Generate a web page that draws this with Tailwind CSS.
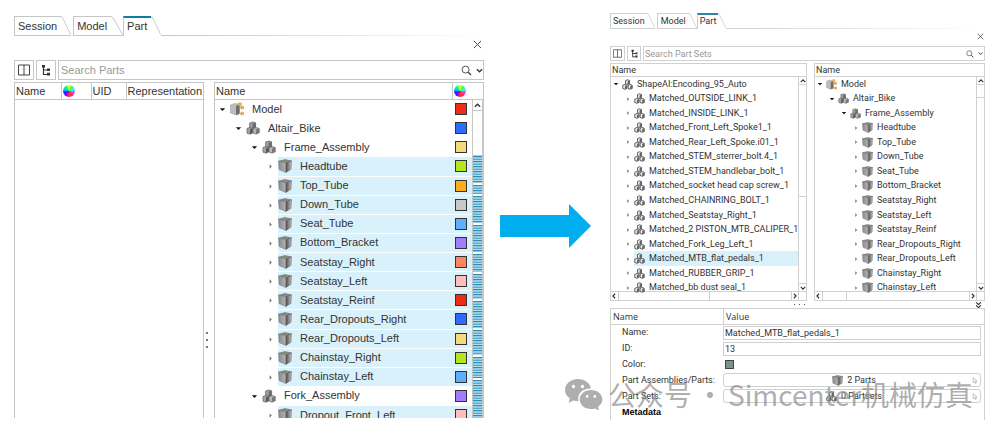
<!DOCTYPE html>
<html lang="en">
<head>
  <meta charset="UTF-8" />
  <meta name="viewport" content="width=device-width, initial-scale=1.0" />
  <title>Part Browser</title>
  <script src="https://cdn.jsdelivr.net/npm/@tailwindcss/browser@4"></script>
</head>
<body class="relative bg-white text-[#333] font-['Liberation_Sans',Arial,sans-serif]">

  <!-- icons -->
  <svg class="absolute size-0">
    <defs>
      <linearGradient id="face" x1="0" x2="1"><stop offset="0" stop-color="#8c8c8c" /><stop offset="1" stop-color="#b4b4b4" /></linearGradient>
      <linearGradient id="side" x1="0" x2="1"><stop offset="0" stop-color="#4a4a4a" /><stop offset="1" stop-color="#c4c4c4" /></linearGradient>
      <symbol id="part" viewBox="0 0 14 14">
        <path d="M.6 2.2 7 .6l6.400 1.300L8 3.800z" fill="#8b8b8b" stroke="#6a6a6a" stroke-width=".6" />
        <path d="M.6 2.200 8 3.800v9.600L1.200 10.600z" fill="url(#face)" stroke="#777" stroke-width=".6" />
        <path d="M8 3.800l5.400-1.900-.5 8.400L8 13.400z" fill="url(#side)" stroke="#666" stroke-width=".6" />
      </symbol>
      <symbol id="assembly" viewBox="0 0 14 14">
        <path d="M3.6 2 7 1l2.6.8v5L6.6 8l-3-.9z" fill="#a0a0a0" stroke="#5c5c5c" stroke-width=".7" />
        <path d="M6.6 2.8V8l3-1.2v-5z" fill="#6a6a6a" />
        <path d="M1 7.4l2.8-.9 2.8.8v4.6L4 13.2l-3-1z" fill="#a2a2a2" stroke="#606060" stroke-width=".7" />
        <path d="M4 8.3v4.9l2.6-1.3V7.3z" fill="#5a5a5a" />
        <path d="M7 7.6l3-1 3.2.9v4.3L10 13.1l-3-1z" fill="#b8b8b8" stroke="#5c5c5c" stroke-width=".7" />
        <path d="M10 8.6v4.5l3.2-1.3V7.5z" fill="#777" />
      </symbol>
      <symbol id="model" viewBox="0 0 14 14">
        <path d="M.5 3 5 1.400l4 1V12L6 13 .5 11z" fill="#bdbdbd" stroke="#999" stroke-width=".5" />
        <path d="M6 4l3-1.400V12l-3 1z" fill="#6f6f6f" />
        <path d="M9.500 2v9.500M9.500 5.500h2.500M9.500 11.500h2.500" fill="none" stroke="#c98a2b" stroke-width="1" />
        <path d="M8.200 1h3v2.600h-3zM11 4.300h2.600v2.600H11zM11 10.200h2.600v2.600H11z" fill="#f3c061" stroke="#c98a2b" stroke-width=".6" />
      </symbol>
      <symbol id="set" viewBox="0 0 14 14">
        <g fill="#f4f4f4" stroke="#444" stroke-width="1.100">
          <path d="M4.500 2 7 1l2.600 1v4L7 7 4.500 6z" />
          <path d="M1 8l2.700-1 2.600 1v4L3.700 13 1 12z" />
          <path d="M7.700 8l2.700-1L13 8v4l-2.600 1-2.700-1z" />
        </g>
        <path d="M7 2.800V7l2.600-1V2zM3.700 8.800V13l2.600-1V8zM10.400 8.800V13L13 12V8z" fill="#666" />
      </symbol>
      <symbol id="open" viewBox="0 0 8 8"><path d="M1 2.500h6L4 5.800z" fill="#111" /></symbol>
      <symbol id="closed" viewBox="0 0 8 8"><path d="M3 1.500 5.500 4 3 6.500z" fill="#777" /></symbol>
      <symbol id="close" viewBox="0 0 10 10"><path d="M1 1l8 8M9 1L1 9" stroke="#444" stroke-width="1.100" /></symbol>
      <symbol id="columns" viewBox="0 0 12 12"><path d="M.5 1h11v10H.5zM6 1v10" fill="none" stroke="#444" /></symbol>
      <symbol id="tree" viewBox="0 0 12 12">
        <path d="M3.500 2v8.500H7M3.500 6H7" fill="none" stroke="#333" stroke-width="1.200" />
        <path d="M2 1h3v2.600H2zM7 4.500h3v2.600H7zM7 8.800h3v2.600H7z" fill="#333" />
      </symbol>
      <symbol id="search" viewBox="0 0 12 12"><circle cx="5" cy="5" r="3.800" fill="none" stroke="#444" /><path d="M7.800 7.800 11 11" stroke="#444" stroke-width="1.500" /></symbol>
      <symbol id="down" viewBox="0 0 8 8"><path d="M1 2.500l3 3 3-3" fill="none" stroke="#333" stroke-width="1.500" /></symbol>
      <symbol id="slant" viewBox="0 0 12 19" preserveAspectRatio="none"><path d="M0 .5 1.500 1 11.500 18.500" fill="none" stroke="#c6c6c6" /></symbol>
      <symbol id="pick" viewBox="0 0 8 10"><path d="M1.500 1v7l1.700-1.500L4.500 9.500l1.200-.6L4.600 6H7z" fill="#fff" stroke="#999" stroke-width=".8" /></symbol>
    </defs>
  </svg>

  <main class="grid grid-cols-[470fr_126fr_375fr] items-start pl-[14px] pr-5">

    <!-- before -->
    <section class="pt-4 text-[11px] leading-none">
      <nav class="flex h-5 gap-[2px]">
        <button class="flex border-b border-[#c6c6c6]"><span class="h-full border-l border-t border-[#c6c6c6] pl-[3px] pr-1 pt-1">Session</span><svg class="h-[19px] w-[10px]"><use href="#slant" /></svg></button>
        <button class="-mr-[2px] flex border-b border-[#c6c6c6]"><span class="h-full border-l border-t border-[#c6c6c6] pl-[3px] pr-1 pt-1">Model</span><svg class="h-[19px] w-3"><use href="#slant" /></svg></button>
        <button class="flex"><span class="h-full border-l border-t-2 border-l-[#c6c6c6] border-t-[#0f7ba3] pl-[3px] pr-1 pt-[3px]">Part</span><svg class="h-[19px] w-[10px]"><use href="#slant" /></svg></button>
        <span class="-ml-[2px] h-px flex-1 self-end bg-linear-to-r from-[#c6c6c6] to-white"></span>
      </nav>
      <div class="flex h-6 items-start justify-end pt-1">
        <button aria-label="Close" class="mr-[2px]"><svg class="size-[9px]"><use href="#close" /></svg></button>
      </div>
      <div class="flex h-5 gap-[2px]">
        <button aria-label="Columns" class="flex w-5 items-center justify-center border border-[#c6c6c6]"><svg class="size-3"><use href="#columns" /></svg></button>
        <button aria-label="Tree" class="flex w-5 items-center justify-center border border-[#c6c6c6]"><svg class="size-3"><use href="#tree" /></svg></button>
        <label class="flex flex-1 items-center border border-[#c6c6c6] pl-[2px]">
          <input type="text" aria-label="Search Parts" placeholder="Search Parts" class="min-w-0 flex-1 outline-none placeholder:text-[#999]" />
          <svg class="size-[11px]"><use href="#search" /></svg>
          <svg class="ml-1 size-[7px]"><use href="#down" /></svg>
        </label>
      </div>
      <div class="mt-[2px] flex h-[336px]">
        <div class="w-[190px] border-x border-t border-[#c6c6c6]">
          <table class="h-[17px] w-full table-fixed border-b border-[#c6c6c6] text-left">
            <tr>
              <th class="w-[46px] pl-[1px] font-normal">Name</th>
              <th class="w-[30px] border-l border-[#c6c6c6] pl-[1px]"><span class="block size-3 rounded-full bg-[conic-gradient(#ff3,#3f3,#3ff,#f3f,#f33,#f33,#80f,#22f,#0cf,#0f6,#ff3)]"></span></th>
              <th class="w-[35px] border-l border-[#c6c6c6] pl-[1px] font-normal">UID</th>
              <th class="overflow-hidden border-l border-[#c6c6c6] pl-[1px] font-normal">Representation</th>
            </tr>
          </table>
        </div>
        <div class="flex w-[10px] flex-col items-center justify-center gap-[5px] pt-[179px] pr-1">
          <i class="size-[2px] bg-[#777]"></i><i class="size-[2px] bg-[#777]"></i><i class="size-[2px] bg-[#777]"></i>
        </div>
        <div class="flex min-w-0 flex-1 flex-col overflow-hidden border-x border-t border-[#c6c6c6]">
          <div class="flex h-[17px] shrink-0 items-center border-b border-[#c6c6c6]">
            <span class="flex-1 pl-[1px]">Name</span>
            <span class="flex h-full w-[31px] items-center border-l border-[#c6c6c6] pl-[1px]"><span class="block size-3 rounded-full bg-[conic-gradient(#ff3,#3f3,#3ff,#f3f,#f33,#f33,#80f,#22f,#0cf,#0f6,#ff3)]"></span></span>
          </div>
          <div class="flex min-h-0 flex-1">
            <ul id="parts" class="flex h-[325px] flex-1 flex-col"></ul>
            <div class="flex w-[11px] flex-col border-x border-[#c6c6c6]">
              <div class="flex h-[11px] items-center justify-center border-b border-[#c6c6c6]"><svg class="size-[7px] rotate-180"><use href="#down" /></svg></div>
              <div class="h-[45px] border-b border-[#c6c6c6]"></div>
              <div id="marks" class="flex flex-1 flex-col gap-[2px]"></div>
            </div>
          </div>
        </div>
      </div>
    </section>

    <svg class="mt-[203px] ml-4 h-[46px] w-[91px]" viewBox="0 0 91 46"><path d="M0 12h69V1l22 22-22 22V34H0z" fill="#00aeef" /></svg>

    <!-- after -->
    <section class="pt-[13px] text-[9px] leading-none font-[Roboto,'Liberation_Sans',sans-serif]">
      <nav class="flex h-4 gap-[2px]">
        <button class="flex border-b border-[#d0d0d0]"><span class="h-full border-l border-t border-[#d0d0d0] px-[2px] pt-[3px]">Session</span><svg class="h-[15px] w-[8px]"><use href="#slant" /></svg></button>
        <button class="-mr-[2px] flex border-b border-[#d0d0d0]"><span class="h-full border-l border-t border-[#d0d0d0] px-[3px] pt-[3px]">Model</span><svg class="h-[15px] w-[8px]"><use href="#slant" /></svg></button>
        <button class="flex"><span class="h-full border-l border-t-2 border-l-[#d0d0d0] border-t-[#2a86b0] px-[2px] pt-[2px]">Part</span><svg class="h-[15px] w-[8px]"><use href="#slant" /></svg></button>
        <span class="-ml-[2px] h-px flex-1 self-end bg-linear-to-r from-[#d0d0d0] to-white"></span>
      </nav>
      <div class="flex h-[17px] items-start justify-end pt-1">
        <button aria-label="Close" class="mr-[1px]"><svg class="size-[7px]"><use href="#close" /></svg></button>
      </div>
      <div class="flex h-[15px] gap-[2px]">
        <button aria-label="Columns" class="flex w-[15px] items-center justify-center border border-[#d0d0d0]"><svg class="size-[9px]"><use href="#columns" /></svg></button>
        <button aria-label="Tree" class="flex w-[14px] items-center justify-center border border-[#d0d0d0]"><svg class="size-[9px]"><use href="#tree" /></svg></button>
        <label class="flex flex-1 items-center border border-[#d0d0d0] pl-[1px]">
          <input type="text" aria-label="Search Part Sets" placeholder="Search Part Sets" class="min-w-0 flex-1 outline-none placeholder:text-[#999]" />
          <svg class="size-2"><use href="#search" /></svg>
          <svg class="ml-1 mr-[1px] size-[5px]"><use href="#down" /></svg>
        </label>
      </div>

      <div class="mt-[2px] grid grid-cols-[197fr_171fr] gap-[7px]">
        <div class="min-w-0 border border-[#d0d0d0]">
          <div class="flex h-[13px] items-center border-b border-[#d0d0d0] pl-[1px]">Name</div>
          <div class="flex h-[214px]">
            <ul id="sets" class="flex h-[218px] min-w-0 flex-1 flex-col"></ul>
            <div class="flex w-2 shrink-0 flex-col border-l border-[#d0d0d0]">
              <div class="flex h-2 items-center justify-center border-b border-[#d0d0d0]"><svg class="size-[6px] rotate-180"><use href="#down" /></svg></div>
              <div class="h-[112px] border-b border-[#d0d0d0]"></div>
              <div class="mt-auto flex h-2 items-center justify-center border-t border-[#d0d0d0]"><svg class="size-[6px]"><use href="#down" /></svg></div>
            </div>
          </div>
          <div class="flex h-[9px] items-center border-t border-[#d0d0d0] pr-[7px]">
            <span class="flex h-full w-2 items-center border-r border-[#d0d0d0]"><svg class="size-[6px] rotate-90"><use href="#down" /></svg></span>
            <span class="h-full w-[91px] border-r border-[#d0d0d0]"></span>
            <span class="ml-auto flex h-full w-2 items-center justify-center border-x border-[#d0d0d0]"><svg class="size-[6px] -rotate-90"><use href="#down" /></svg></span>
          </div>
        </div>
        <div class="min-w-0 border border-[#d0d0d0]">
          <div class="flex h-[13px] items-center border-b border-[#d0d0d0] pl-[1px]">Name</div>
          <div class="flex h-[214px]">
            <ul id="model-tree" class="flex h-[218px] min-w-0 flex-1 flex-col"></ul>
            <div class="flex w-2 shrink-0 flex-col border-l border-[#d0d0d0]">
              <div class="flex h-2 items-center justify-center border-b border-[#d0d0d0]"><svg class="size-[6px] rotate-180"><use href="#down" /></svg></div>
              <div class="h-[13px] border-b border-[#d0d0d0]"></div>
              <div class="mt-auto flex h-2 items-center justify-center border-t border-[#d0d0d0]"><svg class="size-[6px]"><use href="#down" /></svg></div>
            </div>
          </div>
          <div class="flex h-[9px] items-center border-t border-[#d0d0d0] pr-[7px]">
            <span class="flex h-full w-2 items-center border-r border-[#d0d0d0]"><svg class="size-[6px] rotate-90"><use href="#down" /></svg></span>
            <span class="h-full w-6 border-r border-[#d0d0d0]"></span>
            <span class="ml-auto flex h-full w-2 items-center justify-center border-x border-[#d0d0d0]"><svg class="size-[6px] -rotate-90"><use href="#down" /></svg></span>
          </div>
        </div>
      </div>

      <div class="flex h-[7px] items-center pr-1">
        <span class="flex w-[197px] justify-end gap-1 pr-[2px]"><i class="size-px bg-[#555]"></i><i class="size-px bg-[#555]"></i><i class="size-px bg-[#555]"></i></span>
        <span class="ml-auto flex flex-col"><svg class="h-[3px] w-[5px]" viewBox="1 2 6 4"><use href="#down" width="8" height="8" /></svg><svg class="h-[3px] w-[5px]" viewBox="1 2 6 4"><use href="#down" width="8" height="8" /></svg></span>
      </div>

      <div class="grid h-[112px] grid-cols-[112px_1fr] grid-rows-[16px_repeat(6,1fr)] items-center border-x border-t border-[#d0d0d0]">
        <div class="flex h-full items-center border-b border-[#d0d0d0] pl-[2px] font-['Open_Sans',sans-serif]">Name</div>
        <div class="flex h-full items-center border-b border-l border-[#d0d0d0] pl-[2px] font-['Open_Sans',sans-serif]">Value</div>
        <label for="name" class="pl-[11px]">Name:</label>
        <input id="name" type="text" value="Matched_MTB_flat_pedals_1" class="mr-[3px] h-[14px] border border-[#d0d0d0] pl-[1px]" />
        <label for="id" class="pl-[11px]">ID:</label>
        <input id="id" type="text" value="13" class="mr-[3px] h-[14px] border border-[#d0d0d0] pl-[1px]" />
        <span class="pl-[11px]">Color:</span>
        <button aria-label="Color" class="ml-[2px] size-[9px] border border-[#444] bg-[#7b918b]"></button>
        <span class="pl-[11px]">Part Assemblies/Parts:</span>
        <button class="mr-[3px] flex h-[14px] items-center rounded-[3px] border border-[#d0d0d0] pr-[2px]"><span class="flex flex-1 items-center justify-center gap-1 pl-3"><svg class="size-[11px]"><use href="#part" /></svg>2 Parts</span><svg class="h-[7px] w-[6px]"><use href="#pick" /></svg></button>
        <span class="pl-[11px]">Part Sets:</span>
        <button class="mr-[3px] flex h-[14px] items-center rounded-[3px] border border-[#d0d0d0] pr-[2px]"><span class="flex flex-1 items-center justify-center gap-1 pl-3"><svg class="size-[11px]"><use href="#set" /></svg>0 Partsets</span><svg class="h-[7px] w-[6px]"><use href="#pick" /></svg></button>
        <b class="pl-[11px] text-black font-['Liberation_Sans',sans-serif]">Metadata</b>
      </div>
    </section>
  </main>

  <!-- watermark -->
  <div class="pointer-events-none absolute right-8 bottom-2 flex items-center text-[28px] leading-9 text-[#8c8c8c]/70 font-['Noto_Sans_CJK_SC',sans-serif]">
    <svg class="mr-1 h-8 w-10" viewBox="0 0 40 32" fill="currentColor">
      <path fill-rule="evenodd" d="M14 1C6.500 1 1 6 1 12c0 3.500 1.900 6.500 4.800 8.500L4.500 25l5-2.500c1.500.4 3.200.7 5 .7C13 16 18.500 10.500 27 10.600 26 5 20.500 1 14 1zM9.500 6.800a1.700 1.700 0 1 1 0 3.400 1.700 1.700 0 0 1 0-3.400zm9 0a1.700 1.700 0 1 1 0 3.400 1.700 1.700 0 0 1 0-3.400z" />
      <path fill-rule="evenodd" d="M27 12c-6.500 0-11.300 4.200-11.300 9.500S20.500 31 27 31c1.400 0 2.700-.2 3.900-.6l4.100 2-1-3.600c2.700-1.800 4.300-4.300 4.300-7.300C38.300 16.200 33.500 12 27 12zm-3.800 5a1.400 1.400 0 1 1 0 2.800 1.400 1.400 0 0 1 0-2.800zm7.600 0a1.400 1.400 0 1 1 0 2.800 1.400 1.400 0 0 1 0-2.800z" />
    </svg>
    <span>公众号</span>
    <span class="w-9 text-center">·</span>
    <span>Simcenter机械仿真</span>
  </div>

  <script>
    const frame = ['Headtube', 'Top_Tube', 'Down_Tube', 'Seat_Tube', 'Bottom_Bracket', 'Seatstay_Right', 'Seatstay_Left',
      'Seatstay_Reinf', 'Rear_Dropouts_Right', 'Rear_Dropouts_Left', 'Chainstay_Right', 'Chainstay_Left'];
    const colors = ['#b5e61d', '#ffae1a', '#c8c8c8', '#5eb0ff', '#a07cff', '#ff8560', '#ffbdbd', '#f02c18', '#2c6cff', '#f5d97a', '#b5e61d', '#5eb0ff'];

    // [level, icon, name, color, selected]
    const parts = [
      [0, 'model', 'Model', '#f02c18'],
      [1, 'assembly', 'Altair_Bike', '#2c6cff'],
      [2, 'assembly', 'Frame_Assembly', '#f5d97a'],
      ...frame.map((name, i) => [3, 'part', name, colors[i], true]),
      [2, 'assembly', 'Fork_Assembly', '#a07cff'],
      [3, 'part', 'Dropout_Front_Left', '#ffbdbd', true]
    ];
    const setNames = ['OUTSIDE_LINK_1', 'INSIDE_LINK_1', 'Front_Left_Spoke1_1', 'Rear_Left_Spoke.i01_1', 'STEM_sterrer_bolt.4_1',
      'STEM_handlebar_bolt_1', 'socket head cap screw_1', 'CHAINRING_BOLT_1', 'Seatstay_Right_1', '2 PISTON_MTB_CALIPER_1',
      'Fork_Leg_Left_1', 'MTB_flat_pedals_1', 'RUBBER_GRIP_1', 'bb dust seal_1'];

    document.getElementById('parts').innerHTML = parts.map(([level, icon, name, color, on]) => `
      <li class="flex flex-1 items-center" style="padding-left:${level * 16}px">
        <svg class="size-[7px] ml-1 mr-1"><use href="#${level < 3 ? 'open' : 'closed'}" /></svg>
        <div class="flex h-full flex-1 items-center border-b border-white ${on ? 'bg-[#d9f1fa]' : ''}">
          <svg class="size-[14px] mr-2"><use href="#${icon}" /></svg>
          <span class="flex-1">${name}</span>
          <i class="size-3 mr-[5px] border border-[#333]" style="background:${color}"></i>
        </div>
      </li>`).join('');

    const small = ([level, icon, name, open, on]) => `
      <li class="flex flex-1 items-center" style="padding-left:${level * 12}px">
        <svg class="size-[6px] shrink-0 ml-[2px] mr-[3px]"><use href="#${open ? 'open' : 'closed'}" /></svg>
        <div class="flex h-full min-w-0 flex-1 items-center overflow-hidden whitespace-nowrap ${on ? 'bg-[#d9f1fa]' : ''}">
          <svg class="size-[11px] shrink-0 mr-1"><use href="#${icon}" /></svg>
          <span>${name}</span>
        </div>
      </li>`;

    document.getElementById('sets').innerHTML = [
      [0, 'set', 'ShapeAI:Encoding_95_Auto', true],
      ...setNames.map(n => [1, 'set', 'Matched_' + n, false, n.startsWith('MTB')])
    ].map(small).join('');

    document.getElementById('model-tree').innerHTML =
      parts.slice(0, 15).map(([level, icon, name]) => small([level, icon, name, level < 3])).join('');

    document.getElementById('marks').innerHTML = [28, 10, 28, 28, 19, 27, 28, 26, 22, 40].map(h => `
      <i class="bg-[repeating-linear-gradient(#2f8fb8_0_1px,#8fcbe2_1px_3px,#5aabcb_3px_4px,#b4dcea_4px_5px)]" style="flex:${h}"></i>`).join('');
  </script>
</body>
</html>
